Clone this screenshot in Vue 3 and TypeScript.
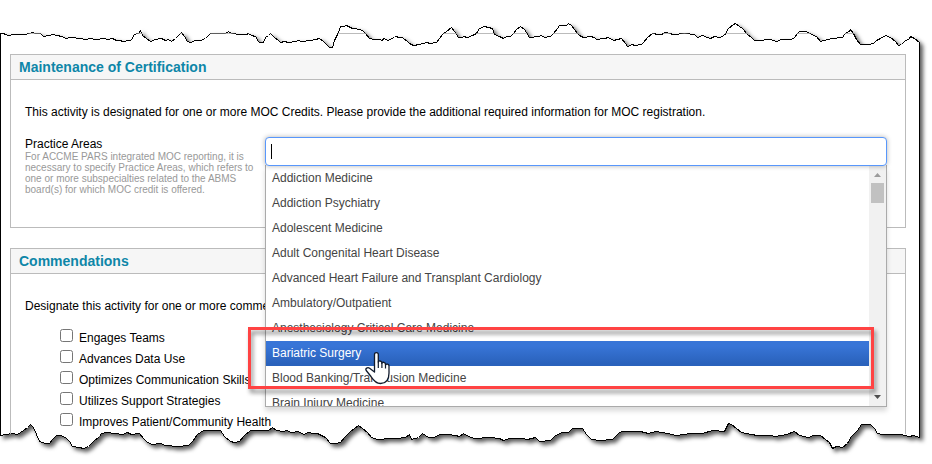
<script setup lang="ts">
import { ref } from 'vue'

const areas: string[] = [
  'Addiction Medicine',
  'Addiction Psychiatry',
  'Adolescent Medicine',
  'Adult Congenital Heart Disease',
  'Advanced Heart Failure and Transplant Cardiology',
  'Ambulatory/Outpatient',
  'Anesthesiology Critical Care Medicine',
  'Bariatric Surgery',
  'Blood Banking/Transfusion Medicine',
  'Brain Injury Medicine',
]
const highlighted = ref('Bariatric Surgery')

const commendations: string[] = [
  'Engages Teams',
  'Advances Data Use',
  'Optimizes Communication Skills',
  'Utilizes Support Strategies',
  'Improves Patient/Community Health',
]

// Torn paper outline: top edge left to right, bottom edge left to right.
const topEdge =
  '0,33 2,33 6,34 7,35 14,34 18,34 24,34 29,33 33,32 34,33 40,33 43,36 48,35 53,34 56,35 62,36 65,38 70,37 80,38 85,39 90,38 95,39 104,38 107,39 112,38 116,40 120,40 122,41 130,40 132,38 133,35 136,33 138,33 140,30 142,35 146,38 150,41 155,39 161,38 165,40 168,39 171,41 175,38 178,35 181,32 184,36 187,41 190,42 195,40 200,40 205,38 208,35 210,33 225,33 228,31 231,33 240,34 246,34 248,33 251,35 255,36 258,41 259,42 263,42 265,37 268,35 270,33 274,37 278,40 280,42 284,41 288,42 295,41 298,40 301,41 310,40 315,39 319,38 323,41 327,45 329,47 332,47 334,40 336,36 338,32 340,26 343,26 346,25 352,28 355,28 362,30 365,33 369,38 374,39 379,39 382,40 383,38 388,40 391,38 394,37 395,36 399,37 402,37 404,39 406,40 409,43 413,45 419,44 426,42 430,43 436,42 439,38 442,34 446,31 451,27 454,31 458,37 462,37 463,36 467,37 472,35 476,33 479,28 484,26 492,28 494,34 499,36 503,38 506,36 510,36 513,33 516,29 520,26 524,29 529,37 538,36 541,35 544,37 550,36 553,33 557,28 559,25 566,25 568,23 571,25 574,29 577,33 579,35 583,37 590,36 594,37 596,39 604,38 608,37 613,40 621,38 625,43 627,46 632,44 634,45 641,44 643,42 647,37 652,33 658,34 661,34 665,32 669,33 673,34 684,33 694,34 697,37 702,35 707,37 710,38 714,36 719,37 724,35 728,28 733,24 735,23 739,26 742,28 747,34 751,37 754,40 758,40 770,39 776,41 781,39 791,39 794,37 797,33 799,31 806,31 811,34 816,36 820,41 827,39 832,38 842,37 844,34 846,32 849,31 850,29 853,33 856,39 860,44 868,44 873,43 876,40 880,38 885,35 890,37 895,41 898,45 901,44 904,41 909,38 910,36 914,38 919,42'
const bottomEdge =
  '0,435 6,434 12,433 17,434 23,430 27,427 30,424 33,427 36,434 39,441 45,443 49,443 52,439 56,435 60,435 65,437 69,441 72,446 79,447 83,448 88,446 93,441 99,436 101,433 107,432 122,434 127,432 131,434 139,433 143,438 147,442 152,444 160,443 165,445 178,446 188,445 192,441 197,434 203,430 208,430 220,430 224,436 230,441 234,442 239,441 244,435 250,430 258,430 268,430 272,427 276,430 283,431 286,430 291,432 298,431 303,434 308,432 313,433 317,433 325,437 330,443 335,443 340,442 344,437 350,431 354,428 358,425 362,428 367,432 371,437 377,439 390,438 396,438 405,437 409,434 411,439 418,437 422,433 428,437 433,437 440,434 448,434 455,435 459,436 463,433 468,436 474,438 490,437 499,438 503,440 509,438 515,438 522,438 527,439 535,437 539,441 550,440 555,435 562,432 568,432 572,428 582,428 586,434 591,439 600,440 612,439 618,433 621,431 630,431 640,431 648,433 655,431 667,433 676,435 690,433 702,433 712,430 724,431 726,427 728,423 731,424 736,428 741,432 751,434 757,435 769,435 775,436 781,435 786,434 794,431 799,435 808,437 813,435 820,435 825,439 829,442 832,448 836,446 842,447 847,443 851,436 857,430 861,424 870,424 874,428 877,433 882,434 893,434 900,434 909,436 913,435 919,437'
const outline = `${topEdge} ${bottomEdge.split(' ').reverse().join(' ')}`
  .split(' ')
  .map((p) => p.split(',').map((n) => Number(n) + 0.5).join(','))
  .join(' ')
</script>

<template>
  <main class="shot">
    <svg class="paper" width="932" height="464" viewBox="0 0 932 464">
      <clipPath id="sheet"><polygon :points="outline" /></clipPath>
      <polygon class="sheet" :points="outline" />
      <path class="rule" d="M10 33.5H906" clip-path="url(#sheet)" />
    </svg>

    <div class="content">
      <section class="panel certification">
        <h2>Maintenance of Certification</h2>
        <div class="body">
          <p class="intro">This activity is designated for one or more MOC Credits. Please provide the additional required information for MOC registration.</p>
          <div class="field">
            <div class="label">
              <div class="name">Practice Areas</div>
              <div class="hint">
                <div>For ACCME PARS integrated MOC reporting, it is</div>
                <div>necessary to specify Practice Areas, which refers to</div>
                <div>one or more subspecialties related to the ABMS</div>
                <div>board(s) for which MOC credit is offered.</div>
              </div>
            </div>
            <div class="select">
              <div class="search"><span class="caret"></span></div>
              <div class="drop">
                <ul>
                  <li v-for="a in areas" :key="a" :class="{ active: a === highlighted }">{{ a }}</li>
                </ul>
                <div class="scrollbar">
                  <svg width="17" height="17" viewBox="0 0 17 17"><path d="M5 11h7L8.500 7z" fill="#9b9b9b" /></svg>
                  <div class="thumb"></div>
                  <svg class="down" width="17" height="17" viewBox="0 0 17 17"><path d="M5 6h7L8.500 10z" fill="#505050" /></svg>
                </div>
              </div>
            </div>
          </div>
        </div>
      </section>

      <section class="panel commendations">
        <h2>Commendations</h2>
        <div class="body">
          <p class="intro short">Designate this activity for one or more commendations</p>
          <div class="checks">
            <div v-for="c in commendations" :key="c" class="check">
              <span class="box"></span><span>{{ c }}</span>
            </div>
          </div>
        </div>
      </section>
    </div>

    <div class="callout"></div>
    <svg class="hand" width="26" height="34" viewBox="0 0 26 34">
      <path
        d="M9.500 19V3.500C9.500 1 13.300 1 13.300 3.500V11C13.500 9.500 16.600 9.600 16.800 11.600V12.300C17.500 10.600 20.300 11.200 20.500 13V14C21.300 12.400 24 13 24 15V22C24 29 20.500 32.500 15.500 32.500C10.500 32.500 8 28.500 6 25.500L1.200 19.500C0 17.500 2.600 15.800 4.600 17.300L9.500 21Z"
        fill="#fff" stroke="#111a2c" stroke-width="1.300" stroke-linejoin="round"
      />
      <path d="M13.300 10.500V17M16.900 12V17M20.500 13.500V17.500" fill="none" stroke="#111a2c" stroke-width="1.200" />
    </svg>
  </main>
</template>

<style>
body {
  background: #fff;
}
</style>

<style scoped>
.shot {
  position: relative;
  width: 932px;
  height: 464px;
  overflow: hidden;
  background: #fff;
  font: 12px/14px "Liberation Sans", Arial, sans-serif;
  color: #000;
}
.paper {
  position: absolute;
  inset: 0;
}
.sheet {
  fill: #fff;
  stroke: #000;
  stroke-width: 1;
  shape-rendering: crispEdges;
  filter: drop-shadow(3px 3px 2px rgba(0, 0, 0, 0.65));
}
.rule {
  stroke: #bbb;
}
.content {
  position: relative;
  padding: 54px 26px 0 10px;
  display: flex;
  flex-direction: column;
  gap: 20px;
}
.panel {
  box-sizing: border-box;
  border: 1px solid #bbb;
}
.certification {
  height: 174px;
  position: relative;
  z-index: 2;
}
.commendations {
  height: 186px;
  border-bottom: 0;
}
h2 {
  margin: 0;
  height: 24px;
  padding-left: 8px;
  border-bottom: 1px solid #bbb;
  background: #f6f6f6;
  color: #0e86a8;
  font-size: 14px;
  line-height: 24px;
}
.body {
  padding: 25px 14px 0;
}
.intro {
  margin: 0;
  white-space: nowrap;
}
.short {
  width: 241px;
  overflow: hidden;
}
.field {
  display: flex;
  margin-top: 18px;
}
.label {
  width: 240px;
  flex: none;
}
.hint {
  color: #999;
  font-size: 10px;
  line-height: 11px;
  white-space: nowrap;
}
.select {
  position: relative;
  width: 622px;
  flex: none;
}
.search {
  box-sizing: border-box;
  height: 29px;
  border: 1px solid #5897fb;
  border-radius: 4px;
  background: #fff;
  box-shadow: 0 0 5px rgba(0, 0, 0, 0.3);
  padding: 6px 5px;
  position: relative;
  z-index: 1;
}
.caret {
  display: block;
  width: 1px;
  height: 15px;
  background: #000;
}
.drop {
  position: absolute;
  box-sizing: border-box;
  top: 28px;
  left: 0;
  width: 622px;
  height: 242px;
  padding-top: 1px;
  border: 1px solid #aaa;
  border-top: 0;
  background: #fff;
  box-shadow: 0 4px 5px rgba(0, 0, 0, 0.15);
  display: flex;
  color: #444;
}
ul {
  flex: 1;
  margin: 0;
  padding: 0;
  list-style: none;
  overflow: hidden;
}
li {
  height: 25px;
  line-height: 24px;
  padding-left: 6px;
  white-space: nowrap;
}
.active {
  color: #fff;
  background: linear-gradient(#3875d7 20%, #2a62bc 90%);
}
.scrollbar {
  width: 17px;
  background: #f1f1f1;
  display: flex;
  flex-direction: column;
  align-items: center;
}
.thumb {
  width: 13px;
  height: 20px;
  background: #c1c1c1;
}
.scrollbar .down {
  margin-top: auto;
}
.checks {
  display: flex;
  flex-direction: column;
  gap: 7px;
  padding: 16px 0 0 35px;
}
.check {
  display: flex;
  gap: 6px;
  height: 14px;
  white-space: nowrap;
}
.check span:last-child {
  padding-top: 2px;
}
.box {
  box-sizing: border-box;
  width: 13px;
  height: 13px;
  border: 1px solid #767676;
  border-radius: 2.5px;
}
.callout {
  position: absolute;
  z-index: 3;
  left: 248px;
  top: 327px;
  box-sizing: border-box;
  width: 626px;
  height: 62px;
  border: 3px solid #ff4343;
  filter: drop-shadow(2px 4px 2px rgba(0, 0, 0, 0.45));
}
.hand {
  position: absolute;
  z-index: 4;
  left: 365px;
  top: 351px;
}
</style>
